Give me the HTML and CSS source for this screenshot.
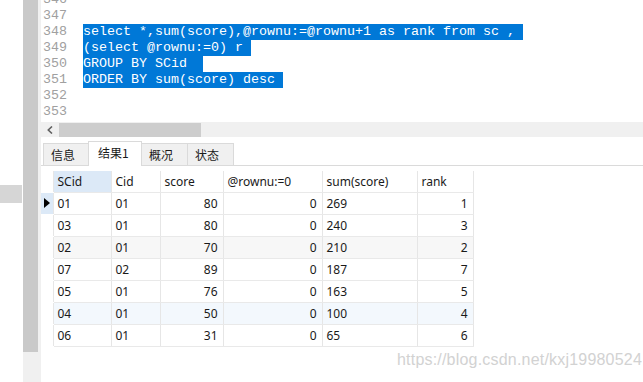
FILE: index.html
```html
<!DOCTYPE html>
<html lang="zh-CN">
<head>
  <meta charset="UTF-8" />
  <title>查询结果</title>
  <link rel="stylesheet" href="styles.css">
</head>
<body>

  <div class="left-pane">
    <div class="left-block"></div>
  </div>

  <div class="splitter">
    <div class="splitter-bar"></div>
  </div>

  <div class="workspace">
    <div class="editor">
      <div class="editor-lines">
        <div class="line"><span class="ln">346</span><span class="code"></span></div>
        <div class="line"><span class="ln">347</span><span class="code"></span></div>
        <div class="line"><span class="ln">348</span><span class="code sel">select *,sum(score),@rownu:=@rownu+1 as rank from sc , </span></div>
        <div class="line"><span class="ln">349</span><span class="code sel">(select @rownu:=0) r </span></div>
        <div class="line"><span class="ln">350</span><span class="code sel">GROUP BY SCid  </span></div>
        <div class="line"><span class="ln">351</span><span class="code sel">ORDER BY sum(score) desc </span></div>
        <div class="line"><span class="ln">352</span><span class="code"></span></div>
        <div class="line"><span class="ln">353</span><span class="code"></span></div>
      </div>
    </div>

    <div class="hscroll">
      <svg class="scroll-arrow" width="6" height="8" viewBox="0 0 6 8">
        <path d="M5 0.5 L1.3 4 L5 7.5" fill="none" stroke="#606060" stroke-width="1.6" />
      </svg>
      <div class="scroll-thumb"></div>
    </div>

    <div class="tabs">
      <div class="tab tab-info">信息</div>
      <div class="tab tab-result active">结果1</div>
      <div class="tab tab-profile">概况</div>
      <div class="tab tab-status">状态</div>
    </div>

    <table class="grid">
      <colgroup>
        <col class="c-ind">
        <col class="c-scid">
        <col class="c-cid">
        <col class="c-score">
        <col class="c-row">
        <col class="c-sum">
        <col class="c-rank">
      </colgroup>
      <thead>
        <tr>
          <th class="ind"></th>
          <th class="sel-col">SCid</th>
          <th>Cid</th>
          <th>score</th>
          <th>@rownu:=0</th>
          <th>sum(score)</th>
          <th>rank</th>
        </tr>
      </thead>
      <tbody>
        <tr class="current">
          <td class="ind"><span class="pointer"></span></td>
          <td>01</td><td>01</td><td class="num">80</td><td class="num">0</td><td>269</td><td class="num">1</td>
        </tr>
        <tr>
          <td class="ind"></td>
          <td>03</td><td>01</td><td class="num">80</td><td class="num">0</td><td>240</td><td class="num">3</td>
        </tr>
        <tr class="alt">
          <td class="ind"></td>
          <td>02</td><td>01</td><td class="num">70</td><td class="num">0</td><td>210</td><td class="num">2</td>
        </tr>
        <tr>
          <td class="ind"></td>
          <td>07</td><td>02</td><td class="num">89</td><td class="num">0</td><td>187</td><td class="num">7</td>
        </tr>
        <tr>
          <td class="ind"></td>
          <td>05</td><td>01</td><td class="num">76</td><td class="num">0</td><td>163</td><td class="num">5</td>
        </tr>
        <tr class="hover">
          <td class="ind"></td>
          <td>04</td><td>01</td><td class="num">50</td><td class="num">0</td><td>100</td><td class="num">4</td>
        </tr>
        <tr>
          <td class="ind"></td>
          <td>06</td><td>01</td><td class="num">31</td><td class="num">0</td><td>65</td><td class="num">6</td>
        </tr>
      </tbody>
    </table>
  </div>

  <div class="watermark">https://blog.csdn.net/kxj19980524</div>

</body>
</html>
```

FILE: styles.css
```css
* {
  box-sizing: border-box;
}

body {
  margin: 0;
  height: 382px;
  display: flex;
  flex-direction: row;
  overflow: hidden;
  background: #fff;
  position: relative;
  font-family: 'Noto Sans', 'Noto Sans CJK SC', sans-serif;
}

.left-pane {
  width: 23px;
  background: #fff;
}

.left-block {
  margin-top: 185px;
  height: 18px;
  width: 22px;
  background: #d6d6d6;
}

.splitter {
  width: 18px;
  background: #f0f0f0;
}

.splitter-bar {
  width: 15px;
  height: 352px;
  background: #c9c9c9;
}

.workspace {
  flex: 1;
  display: flex;
  flex-direction: column;
}

/* sql editor */
.editor {
  height: 122px;
  overflow: hidden;
  background: #fff;
}

.editor-lines {
  margin-top: -8px;
}

.line {
  display: flex;
  height: 16px;
  line-height: 16px;
  font-family: 'Liberation Mono', monospace;
  font-size: 13.333px;
}

.ln {
  width: 42px;
  padding-left: 2px;
  color: #a0a0a0;
}

.code {
  white-space: pre;
  color: #000;
}

.code.sel {
  background: #0078d7;
  color: #fff;
}

/* horizontal scrollbar */
.hscroll {
  height: 15px;
  background: #f0f0f0;
  display: flex;
  align-items: center;
}

.scroll-arrow {
  margin-left: 6px;
}

.scroll-thumb {
  margin-left: 6px;
  width: 142px;
  height: 14px;
  background: #cdcdcd;
}

/* result tabs */
.tabs {
  height: 29px;
  display: flex;
  align-items: flex-end;
  padding-left: 2px;
  border-bottom: 1px solid #dadada;
  font-family: 'Noto Sans CJK SC', sans-serif;
  font-size: 12px;
  color: #1a1a1a;
}

.tab {
  height: 22px;
  line-height: 21px;
  padding-left: 7px;
  background: #f0f0f0;
  border: 1px solid #dadada;
  border-bottom: none;
  margin-right: -1px;
}

.tab.active {
  height: 25px;
  line-height: 22px;
  background: #fff;
  margin-bottom: -1px;
  position: relative;
  padding-left: 9px;
}

.tab-info { width: 46px; }
.tab-result { width: 54px; }
.tab-profile { width: 47px; }
.tab-status { width: 47px; }

/* data grid */
.grid {
  margin-top: 5px;
  border-collapse: collapse;
  table-layout: fixed;
  width: 432px;
  font-size: 12px;
  color: #1a1a1a;
}

.c-ind { width: 12px; }
.c-scid { width: 58px; }
.c-cid { width: 49px; }
.c-score { width: 63px; }
.c-row { width: 99px; }
.c-sum { width: 95px; }
.c-rank { width: 56px; }

.grid th,
.grid td {
  border-right: 1px solid #e6e6e6;
  border-bottom: 1px solid #e9e9e9;
  padding: 0 4px;
  text-align: left;
  font-weight: normal;
  white-space: nowrap;
  overflow: hidden;
}

.grid th {
  height: 21px;
}

.grid td {
  height: 22px;
}

.grid th.sel-col {
  background: #dce9f7;
}

.grid .ind {
  padding: 0;
  border-bottom-color: #fff;
}

.grid td.num {
  text-align: right;
  padding-right: 5px;
}

.grid tr.current td.ind {
  background: #dce9f7;
}

.grid tr.alt td {
  background: #f7f7f7;
}

.grid tr.hover td {
  background: #f3f8fd;
}

.grid tr td.ind {
  background: #fff;
}

.grid tr.current td.ind {
  background: #dce9f7;
}

.pointer {
  display: block;
  width: 0;
  height: 0;
  margin-left: 3px;
  border-top: 5px solid transparent;
  border-bottom: 5px solid transparent;
  border-left: 6px solid #000;
}

.watermark {
  position: absolute;
  left: 397px;
  top: 351px;
  font-family: 'Liberation Sans', sans-serif;
  font-size: 16px;
  color: #d2d2d2;
  letter-spacing: 0.2px;
}
```
